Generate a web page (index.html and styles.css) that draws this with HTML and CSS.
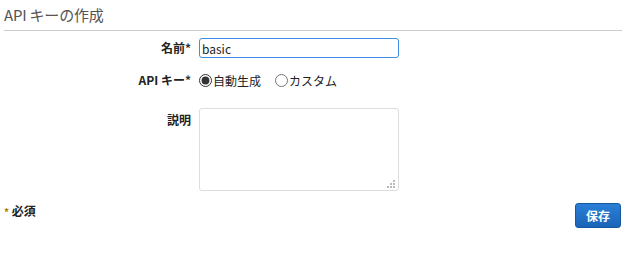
FILE: index.html
```html
<!DOCTYPE html>
<html lang="ja">
<head>
  <meta charset="UTF-8">
  <title>APIキーの作成</title>
  <link rel="stylesheet" href="styles.css">
</head>
<body>
  <div class="panel">
    <h1 class="panel-title">API キーの作成</h1>

    <div class="form">
      <label class="form-label" for="name">名前<span class="req">*</span></label>
      <div class="form-field">
        <input class="text-input" id="name" type="text" value="basic">
      </div>

      <div class="form-label key-label">API キー<span class="req">*</span></div>
      <div class="form-field radios">
        <label class="radio"><input type="radio" name="keytype" checked> 自動生成</label>
        <label class="radio"><input type="radio" name="keytype"> カスタム</label>
      </div>

      <label class="form-label desc-label" for="desc">説明</label>
      <div class="form-field area-wrap">
        <textarea class="text-area" id="desc"></textarea>
        <svg class="grip" width="9" height="8" viewBox="0 0 9 8">
          <rect x="6" y="0" width="2" height="2" fill="#bbb"/>
          <rect x="3" y="3" width="2" height="2" fill="#bbb"/>
          <rect x="6" y="3" width="2" height="2" fill="#bbb"/>
          <rect x="0" y="6" width="2" height="2" fill="#bbb"/>
          <rect x="3" y="6" width="2" height="2" fill="#bbb"/>
          <rect x="6" y="6" width="2" height="2" fill="#bbb"/>
        </svg>
      </div>
    </div>

    <div class="footer">
      <div class="required-note"><span class="req">*</span> 必須</div>
      <button class="btn-primary">保存</button>
    </div>
  </div>
</body>
</html>
```

FILE: styles.css
```css
body {
  margin: 0;
  font-family: "Noto Sans CJK JP", "Noto Sans", sans-serif;
  font-size: 12px;
  color: #222;
  background-color: white;
}
.panel {
  padding: 0 8px 0 4px;
}
.panel-title {
  margin: 0;
  padding-top: 5px;
  height: 25px;
  font-size: 15px;
  font-weight: normal;
  color: #545454;
  line-height: 20px;
  letter-spacing: -0.2px;
  border-bottom: 1px solid #ccc;
}
.form {
  display: grid;
  grid-template-columns: 187px 200px;
  column-gap: 8px;
  margin-top: 7px;
}
.form-label {
  text-align: right;
  font-weight: bold;
  color: #222;
  line-height: 20px;
}
.req {
  color: #333;
  font-weight: bold;
}
.form-field {
  min-height: 20px;
}
.text-input {
  box-sizing: border-box;
  width: 200px;
  height: 20px;
  padding: 0 2px;
  font-family: inherit;
  font-size: 12px;
  color: #222;
  border: 1px solid #3a8ee6;
  border-radius: 3px;
  outline: none;
}
.key-label,
.radios {
  margin-top: 12px;
}
.radios {
  display: flex;
  gap: 14px;
  align-items: center;
  height: 20px;
}
.radio {
  display: flex;
  align-items: center;
  gap: 1px;
}
.radio input {
  margin: 0;
  width: 13px;
  height: 13px;
  accent-color: #333;
}
.desc-label {
  margin-top: 18px;
  padding-top: 2px;
}
.area-wrap {
  position: relative;
  margin-top: 18px;
}
.text-area {
  box-sizing: border-box;
  display: block;
  width: 200px;
  height: 83px;
  border: 1px solid #ddd;
  border-radius: 3px;
  resize: none;
}
.grip {
  position: absolute;
  right: 3px;
  bottom: 3px;
}
.footer {
  display: flex;
  justify-content: space-between;
  align-items: flex-start;
  margin-top: 12px;
}
.required-note {
  font-weight: bold;
  margin-top: -1px;
}
.required-note .req {
  color: #b07a00;
  font-size: 10px;
}
.btn-primary {
  width: 46px;
  height: 25px;
  margin-right: 1px;
  padding: 0;
  font-family: inherit;
  font-size: 12px;
  font-weight: bold;
  color: white;
  background: linear-gradient(#2b7fd6, #1a64b8);
  border: 1px solid #15589f;
  border-radius: 3px;
  cursor: pointer;
}
```
